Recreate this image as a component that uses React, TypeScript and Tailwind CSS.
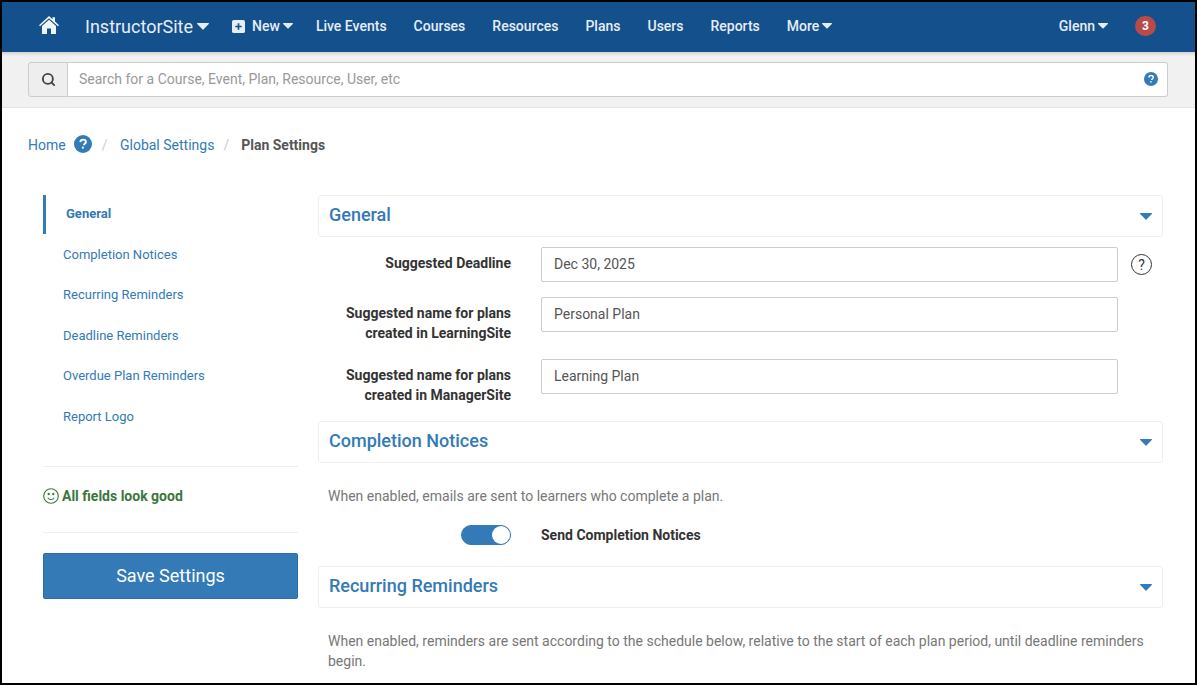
import { Search } from "lucide-react";
import React from "react";

const Caret = ({ className = "" }: { className?: string }) => (
  <svg viewBox="0 0 12 7" className={className} fill="currentColor">
    <path d="M0.6 0h10.800c.5 0 .8.6.4 1L6.400 6.400c-.2.3-.6.3-.8 0L.2 1C-.2.6.1 0 .6 0z" />
  </svg>
);

const HelpSolid = ({ className = "" }: { className?: string }) => (
  <svg viewBox="0 0 18 18" className={className}>
    <circle cx="9" cy="9" r="9" fill="#337ab7" />
    <path
      d="M6.300 7.100c.1-1.600 1.200-2.500 2.800-2.500 1.600 0 2.800.9 2.800 2.300 0 1.900-2.100 1.900-2.100 3.400"
      fill="none"
      stroke="#fff"
      strokeWidth="1.900"
    />
    <rect x="7.900" y="11.700" width="1.900" height="1.900" fill="#fff" />
  </svg>
);

const navLinks = ["Live Events", "Courses", "Resources", "Plans", "Users", "Reports"];

const sideLinks = [
  "Completion Notices",
  "Recurring Reminders",
  "Deadline Reminders",
  "Overdue Plan Reminders",
  "Report Logo",
];

const SectionHead = ({ title, className = "" }: { title: string; className?: string }) => (
  <div
    className={`flex h-[42px] items-center justify-between rounded-[3px] border border-[#eeeeee] pr-[10px] pl-[10px] ${className}`}
  >
    <h3 className="mb-[2px] text-[18px] leading-none font-medium text-[#337ab7]">{title}</h3>
    <Caret className="h-[7px] w-[12px] text-[#337ab7]" />
  </div>
);

const Field = ({ label, value, className = "" }: { label: React.ReactNode; value: string; className?: string }) => (
  <div className={`flex items-start ${className}`}>
    <label className="w-[193px] pt-[6px] text-right text-[14px] leading-[20px] font-bold text-[#333]">{label}</label>
    <div className="ml-[30px] flex h-[35px] w-[577px] items-center rounded-[2px] border border-[#cccccc] pl-[12px] text-[14px] text-[#555]">
      {value}
    </div>
  </div>
);

export default function App() {
  return (
    <div className="h-[685px] w-[1197px] overflow-hidden border-2 border-black bg-white font-['Roboto',sans-serif] text-[14px] text-[#333]">
      <nav className="flex h-[50px] items-center bg-[#14508c] pb-[2px] text-[14px] font-medium text-[#e6edf4]">
        <svg viewBox="0 0 20 18" className="mb-[2px] ml-[37px] h-[18px] w-[20px]" fill="#f1f5f8">
          <path d="M10 0 L13.500 3.200 V1.200 H16 V5.500 L20 9.200 L19 10.300 L10 2.300 L1 10.300 L0 9.200 Z" />
          <path d="M10 3.800 L17 10 V18 H12 V12.500 H8 V18 H3 V10 Z" />
        </svg>
        <span className="ml-[26px] text-[18px] font-normal">InstructorSite</span>
        <Caret className="ml-[4px] h-[7px] w-[12px]" />
        <svg viewBox="0 0 14 14" className="ml-[23px] h-[13px] w-[13px]">
          <rect width="14" height="14" rx="2" fill="#e6edf4" />
          <path d="M7 3.500v7M3.500 7h7" stroke="#14508c" strokeWidth="1.800" />
        </svg>
        <span className="ml-[7px]">New</span>
        <Caret className="ml-[3px] h-[6px] w-[10px]" />
        <div className="ml-[23px] flex gap-[27px]">
          {navLinks.map((l) => (
            <span key={l}>{l}</span>
          ))}
        </div>
        <span className="ml-[27px]">More</span>
        <Caret className="ml-[3px] h-[6px] w-[10px]" />
        <span className="ml-auto">Glenn</span>
        <Caret className="ml-[3px] h-[6px] w-[10px]" />
        <span className="mr-[39px] ml-[27px] flex h-[20px] w-[21px] items-center justify-center rounded-full bg-[#b94a48] text-[12px] font-bold text-white">
          3
        </span>
      </nav>

      <div className="flex h-[56px] border-b border-[#e4e4e4] bg-[#f1f1f1] pt-[10px] pr-[27px] pl-[26px] shadow-[inset_0_4px_4px_-3px_rgba(0,0,0,0.18)]">
        <div className="flex h-[35px] w-[40px] items-center justify-center rounded-l-[3px] border border-[#cccccc] bg-[#eeeeee]">
          <Search size={15} strokeWidth={3} className="text-[#444]" />
        </div>
        <div className="flex h-[35px] flex-1 items-center justify-between rounded-r-[3px] border-y border-r border-[#cccccc] bg-white pr-[9px] pl-[11px] text-[14px] text-[#999]">
          <span>Search for a Course, Event, Plan, Resource, User, etc</span>
          <HelpSolid className="mb-[2px] h-[14px] w-[14px]" />
        </div>
      </div>

      <div className="flex h-[74px] items-center pl-[26px] text-[14px]">
        <span className="mt-[1px] text-[#337ab7]">Home</span>
        <HelpSolid className="mb-[3px] ml-[8px] h-[18px] w-[18px]" />
        <span className="ml-[10px] text-[#ccc]">/</span>
        <span className="ml-[12.500px] text-[#337ab7]">Global Settings</span>
        <span className="ml-[9px] text-[#ccc]">/</span>
        <span className="ml-[12px] font-bold text-[#555]">Plan Settings</span>
      </div>

      <div className="flex items-start pt-[13px] pl-[41px]">
        <aside className="w-[255px] shrink-0">
          <div className="flex h-[39px] items-center border-l-[3px] border-[#337ab7] pb-[2px] pl-[20px] text-[13px] font-bold text-[#337ab7]">
            General
          </div>
          <ul className="border-b border-[#eeeeee] pb-[29px] text-[13px] text-[#337ab7]">
            {sideLinks.map((l) => (
              <li key={l} className="flex h-[40.500px] items-center pl-[20px]">
                {l}
              </li>
            ))}
          </ul>
          <div className="flex h-[66px] items-center gap-[3px] border-b border-[#eeeeee] pb-[6px] text-[14px] font-bold text-[#3c763d]">
            <svg viewBox="0 0 16 16" className="h-[16px] w-[16px]" fill="none" stroke="#3c763d" strokeWidth="1.100">
              <circle cx="8" cy="8" r="7.300" />
              <path d="M4.800 9.800c.8 1.300 1.900 1.900 3.200 1.900s2.400-.6 3.200-1.900" />
              <circle cx="5.700" cy="6" r=".6" fill="#3c763d" />
              <circle cx="10.300" cy="6" r=".6" fill="#3c763d" />
            </svg>
            All fields look good
          </div>
          <button className="mt-[20px] h-[46px] w-full rounded-[2px] border border-[#2e6da4] bg-[#337ab7] text-[18px] text-white">
            Save Settings
          </button>
        </aside>

        <main className="ml-[20px] w-[845px] shrink-0">
          <SectionHead title="General" />
          <div className="relative">
            <Field className="mt-[10px]" label="Suggested Deadline" value="Dec 30, 2025" />
            <span className="absolute top-[7px] left-[813px] flex h-[21px] w-[21px] items-center justify-center rounded-full border-[1.500px] border-[#333] text-[14px] leading-none">
              ?
            </span>
            <Field
              className="mt-[15px]"
              label={
                <>
                  Suggested name for plans
                  <br />
                  created in LearningSite
                </>
              }
              value="Personal Plan"
            />
            <Field
              className="mt-[16px]"
              label={
                <>
                  Suggested name for plans
                  <br />
                  created in ManagerSite
                </>
              }
              value="Learning Plan"
            />
          </div>
          <SectionHead className="mt-[16px]" title="Completion Notices" />
          <p className="mt-[23px] pl-[10px] text-[14px] leading-[20px] text-[#777]">
            When enabled, emails are sent to learners who complete a plan.
          </p>
          <div className="mt-[19px] flex h-[20px] items-center">
            <div className="ml-[143px] flex h-[20px] w-[50px] items-center justify-end rounded-full border border-[#337ab7] bg-[#337ab7]">
              <span className="h-[18px] w-[18px] rounded-full bg-white" />
            </div>
            <span className="ml-[30px] text-[14px] font-bold text-[#333]">Send Completion Notices</span>
          </div>
          <SectionHead className="mt-[21px] h-[41px]" title="Recurring Reminders" />
          <p className="mt-[23px] pl-[10px] text-[14px] leading-[20px] text-[#777]">
            When enabled, reminders are sent according to the schedule below, relative to the start of each plan period,
            until deadline reminders begin.
          </p>
        </main>
      </div>
    </div>
  );
}
